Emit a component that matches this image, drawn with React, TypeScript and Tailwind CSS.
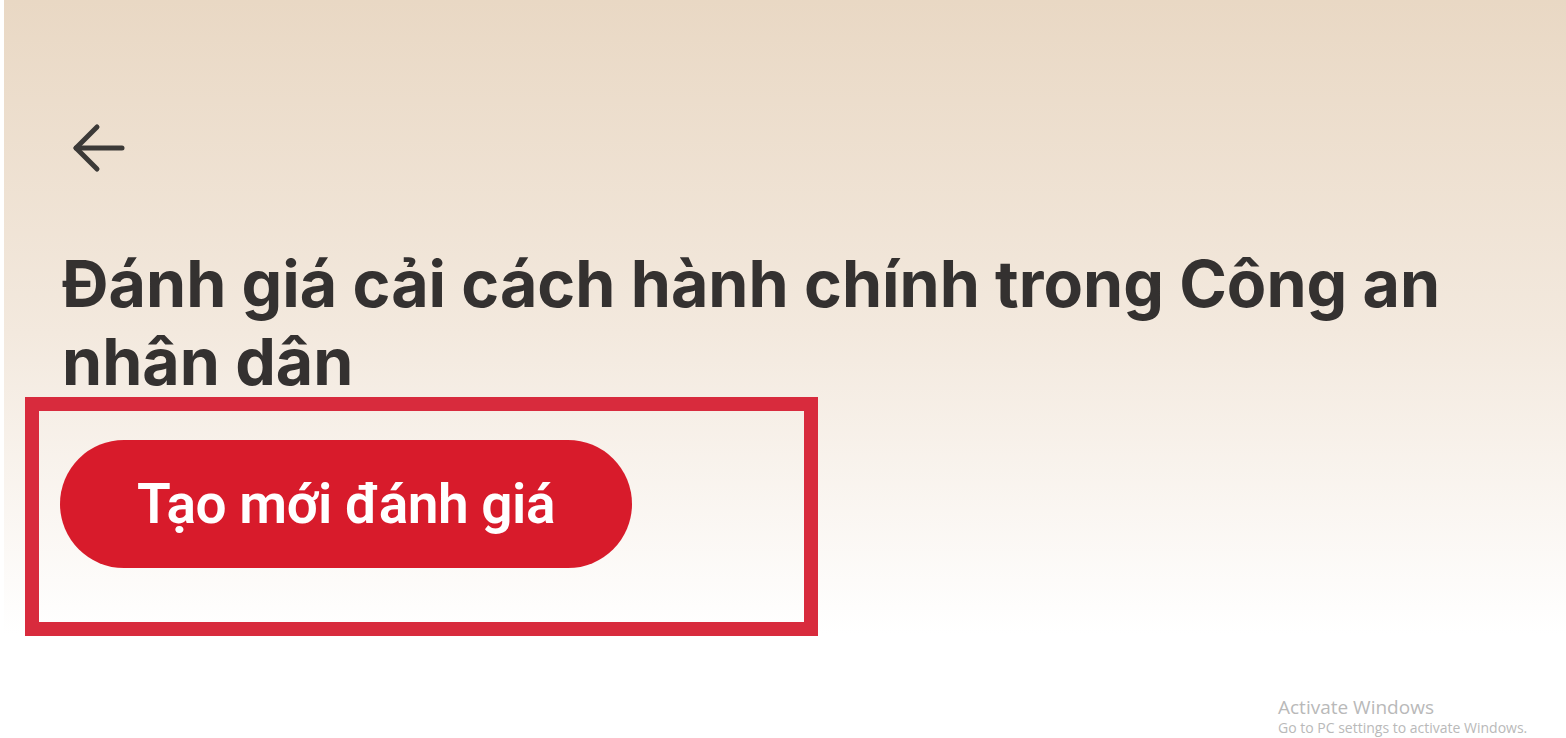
export default function App() {
  return (
    <div className="relative h-[738px] w-full overflow-hidden border-l-4 border-white bg-linear-to-b from-[#e9d8c4] via-[#f3e9de] via-45% to-white to-[86%] font-['Inter','Roboto',sans-serif]">
      <div className="flex flex-col pl-[58px] pt-[123px]">
        <button className="flex h-[50px] w-[64px] items-center pl-[10px] text-[#3b3937]">
          <svg width="54" height="50" viewBox="0 0 54 50" fill="none" stroke="currentColor" strokeWidth="5" strokeLinecap="round" strokeLinejoin="round">
            <path d="M4 25 H50" />
            <path d="M25 4 L4 25 L25 46" />
          </svg>
        </button>

        <h1 className="mt-[72px] max-w-[1460px] text-[64.5px] leading-[78px] font-bold text-[#343130]">
          Đánh giá cải cách hành chính trong Công an nhân dân
        </h1>
      </div>

      <div className="ml-[21px] mt-[-4px] w-[793px] border-[14px] border-[#d82b3d] pb-[54px] pl-[21px] pt-[29px]">
        <button className="flex h-[128px] w-[572px] items-center justify-center rounded-full bg-[#d81b2b] text-[55px] font-semibold tracking-[-0.5px] text-white font-['Roboto','Inter',sans-serif]">
          Tạo mới đánh giá
        </button>
      </div>

      <div className="absolute bottom-[1px] left-[1274px] flex flex-col font-['Open_Sans','Noto_Sans',sans-serif] text-[#b9b9b9]">
        <span className="text-[19px] leading-[24px]">Activate Windows</span>
        <span className="text-[14px] leading-[18px]">Go to PC settings to activate Windows.</span>
      </div>
    </div>
  );
}
